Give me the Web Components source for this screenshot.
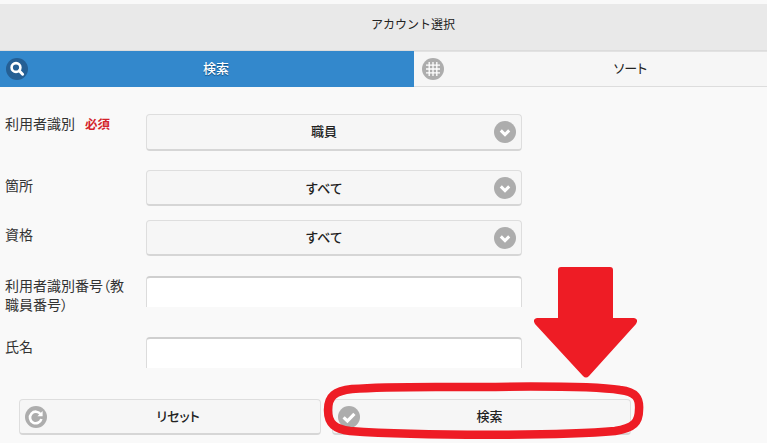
<!DOCTYPE html>
<html lang="ja">
<head>
<meta charset="utf-8">
<title>アカウント選択</title>
<style>
html,body{margin:0;padding:0;background:#f9f9f9;}
body{width:767px;height:443px;overflow:hidden;position:relative;font-family:"Noto Sans CJK JP","Liberation Sans",sans-serif;color:#333;}
</style>
</head>
<body>
<account-page></account-page>
<script>
const ICONS={
 search:'<circle cx="10" cy="9.5" r="4.4" fill="none" stroke="#fff" stroke-width="2.6"/><path d="M13.2 12.8l3.4 3.4" stroke="#fff" stroke-width="3" stroke-linecap="round"/>',
 grid:'<path d="M4 7.2h14M4 11h14M4 14.8h14M7.2 4v14M11 4v14M14.8 4v14" stroke="#fff" stroke-width="1.3" fill="none"/>',
 chevron:'<path d="M6.8 9.4l4.2 4.2 4.2-4.2" fill="none" stroke="#fff" stroke-width="3" stroke-linecap="butt"/>',
 refresh:'<path d="M15.6 8.2A5.8 5.8 0 1 0 16.4 13" fill="none" stroke="#fff" stroke-width="2.6"/><path d="M12.4 10.2h5.2V5z" fill="#fff"/>',
 check:'<path d="M5.6 11.4l3.8 3.6 7-7.2" fill="none" stroke="#fff" stroke-width="3.2"/>'
};
class UiIcon extends HTMLElement{
 connectedCallback(){
  const bg=this.getAttribute('bg')||'#adadad';
  this.attachShadow({mode:'open'}).innerHTML=`<style>:host{display:block;width:22px;height:22px}svg{display:block}</style>
  <svg width="22" height="22" viewBox="0 0 22 22"><circle cx="11" cy="11" r="11" fill="${bg}"/>${ICONS[this.getAttribute('name')]}</svg>`;
 }
}
customElements.define('ui-icon',UiIcon);

class AppHeader extends HTMLElement{
 constructor(){super();this.attachShadow({mode:'open'}).innerHTML=`<style>
 :host{display:flex;box-sizing:border-box;height:47px;margin-top:4px;background:#e9e9e9;border-bottom:1px solid #dcdcdc;align-items:center;justify-content:center;font-size:12px;color:#222;padding:0 0 7px 59px;}
 </style><slot></slot>`;}
}
customElements.define('app-header',AppHeader);

class TabBar extends HTMLElement{
 constructor(){super();this.attachShadow({mode:'open'}).innerHTML=`<style>
 :host{display:grid;grid-template-columns:414px 353px;height:36px;}
 </style><slot></slot>`;}
}
customElements.define('tab-bar',TabBar);

class TabItem extends HTMLElement{
 connectedCallback(){
  const on=this.hasAttribute('active');
  this.attachShadow({mode:'open'}).innerHTML=`<style>
  :host{display:flex;align-items:center;box-sizing:border-box;height:36px;padding-left:${on?6:8}px;font-size:13px;font-feature-settings:"palt";
   background:${on?'#3388cc':'#f6f6f6'};color:${on?'#fff':'#222'};border-bottom:${on?'0':'1px solid #dddddd'};border-top:${on?'0':'1px solid #e2e2e2'};
   ${on?'text-shadow:0 1px 1px #0d4a7c;font-weight:500;':''}}
  ui-icon{flex:none}
  span{flex:1;text-align:center;padding-bottom:3px;margin-left:${on?-10:50}px}
  </style><ui-icon name="${this.getAttribute('icon')}" bg="${on?'#255f94':'#adadad'}"></ui-icon><span><slot></slot></span>`;
 }
}
customElements.define('tab-item',TabItem);

class FormRow extends HTMLElement{
 connectedCallback(){
  const lt=this.getAttribute('label-top')||'0';
  this.attachShadow({mode:'open'}).innerHTML=`<style>
  :host{display:grid;grid-template-columns:141px 376px;grid-template-rows:${this.getAttribute('h')||36}px;margin-top:${this.getAttribute('gap')||0}px;}
  .l{font-size:14px;line-height:19px;color:#333;padding-top:${lt}px;height:0;}
  </style><div class="l"><slot name="label"></slot></div><div><slot></slot></div>`;
 }
}
customElements.define('form-row',FormRow);

class SelectBox extends HTMLElement{
 connectedCallback(){
  const h=this.getAttribute('h')||36;
  const pb=this.getAttribute('text-up')||0;
  this.attachShadow({mode:'open'}).innerHTML=`<style>
  :host{display:flex;align-items:center;box-sizing:border-box;height:${h}px;background:#f6f6f6;border:1px solid #dedede;border-bottom:2px solid #d6d6d6;border-radius:4px;font-size:13px;font-weight:500;color:#222;padding-right:5px;}
  span{flex:1;text-align:center;padding-left:7px;padding-bottom:${pb}px;}
  </style><span><slot></slot></span><ui-icon name="chevron"></ui-icon>`;
 }
}
customElements.define('select-box',SelectBox);

class TextField extends HTMLElement{
 constructor(){super();this.attachShadow({mode:'open'}).innerHTML=`<style>
 :host{display:block;box-sizing:border-box;height:31px;background:#fff;border:1px solid #dcdcdc;border-top:2px solid #cfcfcf;border-bottom:0;border-radius:4px 4px 0 0;}
 </style>`;}
}
customElements.define('text-field',TextField);

class ActionButton extends HTMLElement{
 connectedCallback(){
  this.attachShadow({mode:'open'}).innerHTML=`<style>
  :host{display:flex;align-items:center;box-sizing:border-box;height:36px;background:#f6f6f6;border:1px solid #dedede;border-bottom:2px solid #d6d6d6;border-radius:4px;padding-left:5px;font-size:13px;font-weight:500;font-feature-settings:"palt";color:#222;}
  span{flex:1;text-align:center;margin-left:-11px;padding-bottom:2px;}
  </style><ui-icon name="${this.getAttribute('icon')}"></ui-icon><span><slot></slot></span>`;
 }
}
customElements.define('action-button',ActionButton);

class CalloutMarks extends HTMLElement{
 constructor(){super();this.attachShadow({mode:'open'}).innerHTML=`<style>
 :host{position:absolute;left:0;top:0;width:767px;height:443px;pointer-events:none;}
 svg{display:block}
 </style><svg width="767" height="443" viewBox="0 0 767 443">
 <path d="M561 267H610Q613 267 613 270V318H634Q639 319 636 324L589 376Q586 379 583 376L535 324Q532 319 537 318H558V270Q558 267 561 267Z" fill="#ee1c25"/>
 <path d="M480 387C550 386 600 387 620 390C636 392 640 398 639 410C639 422 634 428 615 431C560 436 420 436 350 431C335 429 328 424 328 410C328 396 335 391 352 389C390 386 430 387 480 387Z" fill="none" stroke="#ee1c25" stroke-width="8.5"/>
 </svg>`;}
}
customElements.define('callout-marks',CalloutMarks);

class SearchForm extends HTMLElement{
 constructor(){super();this.attachShadow({mode:'open'}).innerHTML=`<style>
 :host{display:block;padding:27px 0 0 5px;}
 </style><slot></slot>`;}
}
customElements.define('search-form',SearchForm);

class ButtonRow extends HTMLElement{
 constructor(){super();this.attachShadow({mode:'open'}).innerHTML=`<style>
 :host{display:grid;grid-template-columns:302px 299px;column-gap:11px;margin:31px 0 0 14px;}
 </style><slot></slot>`;}
}
customElements.define('button-row',ButtonRow);

class AccountPage extends HTMLElement{
 constructor(){super();this.attachShadow({mode:'open'}).innerHTML=`<style>
 :host{display:block;}
 .req{color:#d3222a;font-weight:700;font-size:12.5px;margin-left:10px;}
 .lb{display:block}
 </style>
 <app-header>アカウント選択</app-header>
 <tab-bar>
  <tab-item active icon="search">検索</tab-item>
  <tab-item icon="grid">ソート</tab-item>
 </tab-bar>
 <search-form>
  <form-row h="37"><span slot="label" class="lb">利用者識別<span class="req">必須</span></span><select-box h="37" text-up="3">職員</select-box></form-row>
  <form-row gap="19" label-top="6"><span slot="label" class="lb">箇所</span><select-box>すべて</select-box></form-row>
  <form-row gap="14" label-top="5"><span slot="label" class="lb">資格</span><select-box text-up="2">すべて</select-box></form-row>
  <form-row gap="20" h="31"><span slot="label" class="lb" style="font-feature-settings:'palt'">利用者識別番号（教<br>職員番号）</span><text-field></text-field></form-row>
  <form-row gap="30" h="31"><span slot="label" class="lb">氏名</span><text-field></text-field></form-row>
  <button-row><action-button icon="refresh">リセット</action-button><action-button icon="check">検索</action-button></button-row>
 </search-form>
 <callout-marks></callout-marks>`;}
}
customElements.define('account-page',AccountPage);
</script>
</body>
</html>
